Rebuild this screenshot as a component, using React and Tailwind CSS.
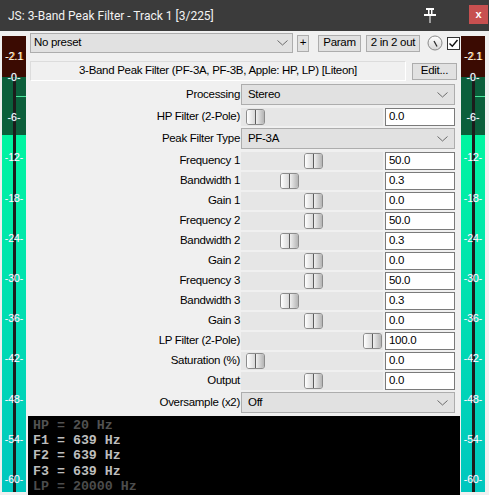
import React from 'react';

const marks = ['-0-', '-6-', '-12-', '-18-', '-24-', '-30-', '-36-', '-42-', '-48-', '-54-', '-60-'];

const rows = [
  { type: 'select', label: 'Processing', value: 'Stereo' },
  { type: 'slider', label: 'HP Filter (2-Pole)', pos: 5, value: '0.0' },
  { type: 'select', label: 'Peak Filter Type', value: 'PF-3A' },
  { type: 'slider', label: 'Frequency 1', pos: 63, value: '50.0' },
  { type: 'slider', label: 'Bandwidth 1', pos: 39, value: '0.3' },
  { type: 'slider', label: 'Gain 1', pos: 63, value: '0.0' },
  { type: 'slider', label: 'Frequency 2', pos: 63, value: '50.0' },
  { type: 'slider', label: 'Bandwidth 2', pos: 39, value: '0.3' },
  { type: 'slider', label: 'Gain 2', pos: 63, value: '0.0' },
  { type: 'slider', label: 'Frequency 3', pos: 63, value: '50.0' },
  { type: 'slider', label: 'Bandwidth 3', pos: 39, value: '0.3' },
  { type: 'slider', label: 'Gain 3', pos: 63, value: '0.0' },
  { type: 'slider', label: 'LP Filter (2-Pole)', pos: 122, value: '100.0' },
  { type: 'slider', label: 'Saturation (%)', pos: 5, value: '0.0' },
  { type: 'slider', label: 'Output', pos: 63, value: '0.0' },
  { type: 'select', label: 'Oversample (x2)', value: 'Off' },
];

const readout = [
  { text: 'HP = 20 Hz', color: 'text-[#525252]' },
  { text: 'F1 = 639 Hz', color: 'text-[#bdbdbd]' },
  { text: 'F2 = 639 Hz', color: 'text-[#bdbdbd]' },
  { text: 'F3 = 639 Hz', color: 'text-[#bdbdbd]' },
  { text: 'LP = 20000 Hz', color: 'text-[#4c4c4c]' },
];

const Chevron = () => (
  <svg width="11" height="6" viewBox="0 0 11 6" className="shrink-0">
    <polyline points="0.5,0.5 5.5,5 10.5,0.5" fill="none" stroke="#6b6b6b" strokeWidth="1" />
  </svg>
);

const Meter = ({ lineLeft }) => (
  <div className="relative mt-[5px] flex h-[456px] w-[24px] shrink-0 flex-col font-['Liberation_Sans',sans-serif] tracking-normal">
    <div className="h-[41px] bg-[#3b0b02]"></div>
    <div className="h-[58px] bg-[#0b5f3b]"></div>
    <div className="flex-1 bg-gradient-to-b from-[#00f5a0] to-[#00c7bf]"></div>
    {/* peak hold + needle */}
    <div className="absolute top-[60px] right-0 h-[1px] w-[12px] bg-[#49e59a]"></div>
    <div className={`absolute top-[42px] bottom-0 w-[3px] bg-[#1c1c1c] ${lineLeft}`}></div>
    <div className="absolute top-[14px] left-0 w-full text-center text-[10.5px] leading-[12px] text-white [text-shadow:1px_0_0_#d98a2a]">
      -2.1
    </div>
    {marks.map((m, i) => (
      <div
        key={m}
        className="absolute left-0 w-full text-center text-[10.5px] leading-[12px] text-white [text-shadow:0_0_1px_#6aa0c0]"
        style={{ top: 35 + i * 40.2 }}
      >
        {m}
      </div>
    ))}
  </div>
);

const Thumb = ({ left }) => (
  <div
    className="absolute top-[1px] flex h-[16px] w-[19px] overflow-hidden rounded-[3px] border border-[#8c8c8c]"
    style={{ left }}
  >
    <div className="w-[8px] bg-gradient-to-r from-[#ffffff] to-[#d8d8d8]"></div>
    <div className="w-[1px] bg-[#5c5c5c]"></div>
    <div className="flex-1 bg-gradient-to-r from-[#f0f0f0] to-[#b4b4b4]"></div>
  </div>
);

const Row = ({ row }) => {
  if (row.type === 'select') {
    return (
      <div className="mt-[1px] mb-[2px] flex h-[21px] items-center">
        <div className="w-[213px] shrink-0 pr-[1px] text-right">{row.label}</div>
        <div className="flex h-full w-[214px] items-center justify-between border border-[#adadad] bg-[#e1e1e1] pr-[6px] pl-[6px]">
          <span>{row.value}</span>
          <Chevron />
        </div>
      </div>
    );
  }
  return (
    <div className="flex h-[20px] items-center">
      <div className="w-[213px] shrink-0 pr-[1px] text-right">{row.label}</div>
      <div className="relative h-[18px] w-[142px] shrink-0 bg-[#e6e6e6]">
        <Thumb left={row.pos} />
      </div>
      <div className="ml-[2px] flex h-[18px] w-[70px] items-center border border-[#7a7a7a] bg-white pl-[3px]">
        {row.value}
      </div>
    </div>
  );
};

export default function App() {
  return (
    <div className="h-[495px] w-[489px] overflow-hidden bg-[#f0f0f0] font-['Liberation_Sans',sans-serif] text-[11.5px] tracking-[-0.3px] text-black">
      {/* Title bar */}
      <div className="flex h-[31px] items-center bg-[#3b3b3b] pl-[8px] font-['Roboto','Noto_Sans',sans-serif] text-[12px] tracking-normal text-[#f2f2f2]">
        <span className="flex-1">JS: 3-Band Peak Filter - Track 1 [3/225]</span>
        <svg width="14" height="16" viewBox="0 0 14 16" className="mr-[32px] mb-[2px]">
          <rect x="3" y="1" width="8" height="2" fill="#fff" />
          <rect x="5" y="3" width="1.5" height="5" fill="#fff" />
          <rect x="8" y="3" width="1.5" height="5" fill="#fff" />
          <rect x="1" y="7" width="12" height="2" fill="#fff" />
          <rect x="6.5" y="9" width="1" height="7" fill="#fff" />
        </svg>
        <div className="mr-[1px] mb-[2px] flex h-[19px] w-[19px] items-center justify-center bg-[#c75050] font-['Liberation_Sans',sans-serif] text-[11px] font-bold leading-none text-white">
          x
        </div>
      </div>

      <div className="flex items-start">
        <div className="ml-[2px] shrink-0">
          <Meter lineLeft="left-[11px]" />
        </div>

        {/* center column */}
        <div className="ml-[2px] flex w-[432px] shrink-0 flex-col">
          {/* preset row */}
          <div className="mt-[2px] flex h-[20px] items-center pl-[2px]">
            <div className="flex h-[20px] w-[263px] items-center justify-between border border-[#adadad] bg-[#e1e1e1] pr-[4px] pl-[3px]">
              <span>No preset</span>
              <Chevron />
            </div>
            <div className="ml-[4px] flex h-[17px] w-[12px] items-center justify-center border border-[#adadad] bg-[#e1e1e1]">+</div>
            <div className="ml-[9px] flex h-[17px] w-[43px] items-center justify-center border border-[#adadad] bg-[#e1e1e1]">Param</div>
            <div className="ml-[5px] flex h-[17px] w-[54px] items-center justify-center border border-[#adadad] bg-[#e1e1e1]">2 in 2 out</div>
            <svg width="16" height="16" viewBox="0 0 16 16" className="ml-[7px]">
              <defs>
                <linearGradient id="knob" x1="0" y1="0" x2="0" y2="1">
                  <stop offset="0" stopColor="#ffffff" />
                  <stop offset="1" stopColor="#d6d6d6" />
                </linearGradient>
              </defs>
              <circle cx="8" cy="8" r="7" fill="url(#knob)" stroke="#8a8a8a" strokeWidth="1" />
              <line x1="7" y1="6" x2="10" y2="11.5" stroke="#2a2a2a" strokeWidth="1.3" />
            </svg>
            <div className="ml-[4px] flex h-[13px] w-[13px] items-center justify-center border border-[#333] bg-white">
              <svg width="11" height="11" viewBox="0 0 11 11">
                <polyline points="1.5,5.5 4.3,8.3 9.5,2" fill="none" stroke="#111" strokeWidth="1.4" />
              </svg>
            </div>
          </div>

          {/* description row */}
          <div className="mt-[8px] flex h-[20px] items-center pl-[2px]">
            <div className="flex h-[20px] w-[376px] items-center justify-center border border-[#dcdcdc] border-r-white border-b-white bg-[#f0f0f0]">
              3-Band Peak Filter (PF-3A, PF-3B, Apple: HP, LP) [Liteon]
            </div>
            <div className="ml-[6px] flex h-[17px] w-[45px] items-center justify-center border border-[#adadad] bg-[#e1e1e1]">Edit...</div>
          </div>

          {/* parameters */}
          <div className="mt-[2px] flex flex-col">
            {rows.map(r => (
              <Row key={r.label} row={r} />
            ))}
          </div>

          {/* readout */}
          <div className="mt-[1px] h-[80px] bg-black pt-[2px] pl-[5px] font-['Liberation_Mono',monospace] text-[13.3px] leading-[15.2px] font-bold tracking-normal whitespace-pre">
            {readout.map(l => (
              <div key={l.text} className={l.color}>{l.text}</div>
            ))}
          </div>
        </div>

        <div className="ml-[1px] shrink-0">
          <Meter lineLeft="left-[11px]" />
        </div>
      </div>
    </div>
  );
}
